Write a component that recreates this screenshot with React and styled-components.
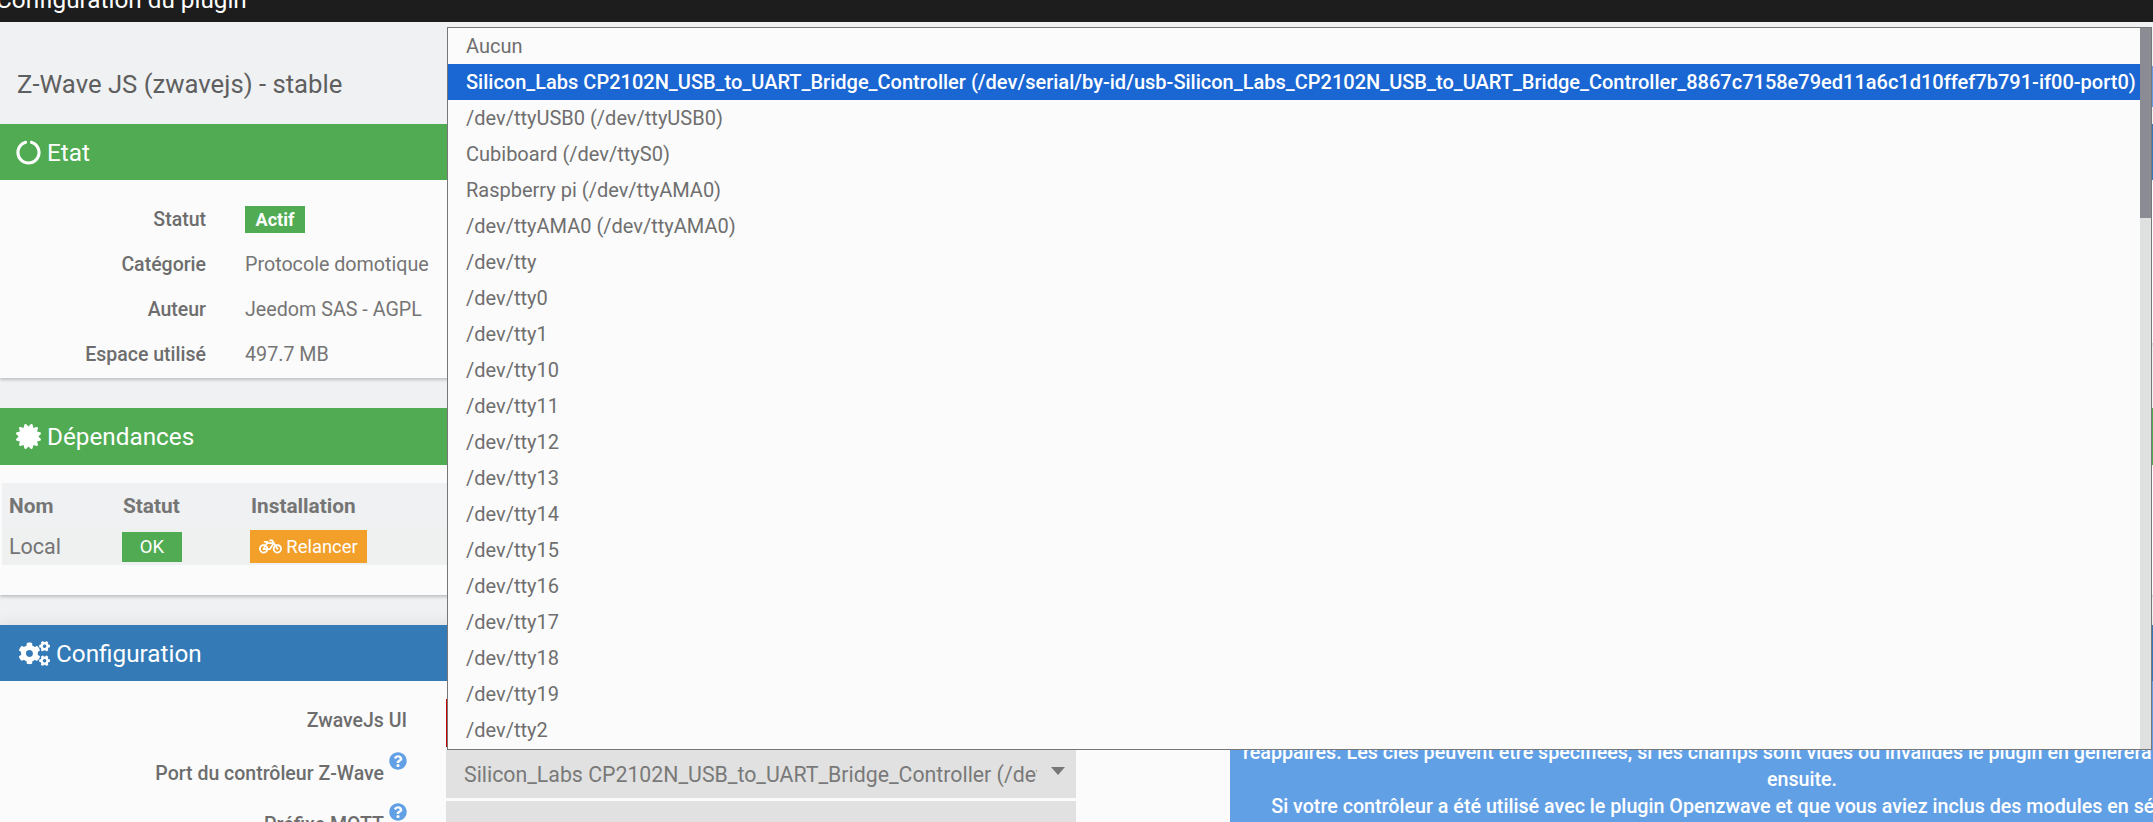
import React from "react";
import styled, { createGlobalStyle } from "styled-components";
import { FaCircleNotch, FaCertificate, FaCogs, FaBicycle, FaQuestionCircle } from "react-icons/fa";

const Global = createGlobalStyle`
  html, body { margin: 0; padding: 0; height: 822px; overflow: hidden; background: #f0f1f3; }
  body { font-family: Roboto, "Liberation Sans", sans-serif; color: #6b6b6b; }
`;
const Page = styled.div`position: relative; width: 2153px; height: 822px; overflow: hidden; display: flex; flex-direction: column;`;
const TopBar = styled.header`height: 22px; flex: none; background: #1d1d1d; color: #fff; overflow: hidden; display: flex; align-items: flex-end; position: relative; z-index: 1;`;
const TopTitle = styled.span`font-size: 24.3px; line-height: 28px; margin-left: -4px; margin-bottom: 8px; white-space: nowrap;`;
const TitleRow = styled.div`height: 102px; flex: none; display: flex; align-items: center; justify-content: space-between; padding-top: 24px; box-sizing: border-box;`;
const PluginName = styled.h1`margin: 0 0 0 17px; font-size: 25.7px; font-weight: 400; color: #5f5f5f; line-height: 30px; position: relative; top: -1px;`;
const Action = styled.div`width: 300px; height: 41px; background: #62a0e6; position: relative; top: 1px;`;
const Columns = styled.div`display: grid; grid-template-columns: 1075px 1fr; column-gap: 5px; flex: none;`;
const Stack = styled.div`display: flex; flex-direction: column;`;
const Panel = styled.section`
  background: #fbfbfb;
  box-shadow: 0 2px 3px rgba(0,0,0,.2);
  height: ${p => p.$height}px;
  margin-bottom: ${p => p.$gap}px;
`;
const PanelHead = styled.div`
  height: ${p => p.$h || 56}px; background: ${p => p.$color}; color: #fff; display: flex; align-items: center; gap: 6px;
  padding-left: ${p => p.$pad || 16}px; font-size: 24.3px; box-sizing: border-box;
  svg { flex: none; }
`;
const InfoGrid = styled.div`display: grid; grid-template-columns: 206px 1fr; column-gap: 39px; grid-auto-rows: 45px; padding-top: 17px;`;
const InfoLabel = styled.div`text-align: right; font-size: 19.5px; font-weight: 500; line-height: 45px; color: #6d6d6d;`;
const InfoValue = styled.div`font-size: 19.7px; line-height: 45px; color: #757575; display: flex; align-items: center; white-space: nowrap;`;
const Badge = styled.span`background: #50ab53; color: #fff; font-weight: 700; font-size: 18px; width: 60px; height: 27px; display: flex; align-items: center; justify-content: center;`;
const DepTable = styled.div`margin: 18px 0 0 2px;`;
const DepRow = styled.div`
  display: grid; grid-template-columns: 114px 128px 1fr; height: ${p => p.$h}px; align-items: center;
  background: ${p => p.$bg}; padding-left: 7px; font-weight: ${p => p.$w}; color: #757575; font-size: ${p => p.$size}px;
`;
const OkBtn = styled.span`background: #50ab53; color: #fff; width: 60px; height: 30px; display: flex; align-items: center; justify-content: center; font-size: 18.5px; margin-left: -1px; font-weight: 400;`;
const RetryBtn = styled.span`background: #f2a02a; color: #fff; width: 117px; height: 33px; display: flex; align-items: center; justify-content: center; gap: 4px; font-size: 18.4px; margin-left: -1px;`;
const ConfigPanel = styled.section`background: #fbfbfb; flex: 1; min-height: 0; box-shadow: 0 -3px 12px rgba(0,0,0,.07);`;
const ConfigBody = styled.div`display: grid; grid-template-columns: 1230px 1fr; height: 141px; overflow: hidden;`;
const Form = styled.div`display: flex; flex-direction: column; padding-top: 18px;`;
const FormRow = styled.div`display: grid; grid-template-columns: 407px 630px; column-gap: 39px; height: ${p => p.$h}px; margin-bottom: ${p => p.$mb || 0}px;`;
const FormLabel = styled.label`display: flex; justify-content: flex-end; font-size: 19.5px; font-weight: 500; color: #6d6d6d; gap: 5px; align-items: center; padding-bottom: ${p => p.$pb || 0}px; box-sizing: border-box; white-space: nowrap;`;
const Help = styled(FaQuestionCircle)`color: #62a0e6; font-size: 18px; align-self: flex-start; margin-top: ${p => p.$mt}px;`;
const RedButton = styled.div`background: #c40000; height: 48px;`;
const FakeSelect = styled.div`background: #e0e1e0; height: 48px; display: flex; align-items: center; padding-left: 18px; position: relative; font-size: 21.3px; color: #797979; box-sizing: border-box;`;
const SelectText = styled.span`width: 573px; overflow: hidden; white-space: nowrap;`;
const Caret = styled.span`position: absolute; left: 605px; top: 17px; width: 0; height: 0; border-left: 7px solid transparent; border-right: 7px solid transparent; border-top: 8px solid #777;`;
const Alert = styled.aside`background: #62a0e6; color: #fff; width: 1144px; height: 141px; box-sizing: border-box; padding-top: 4px; font-size: 19.7px; font-weight: 500; line-height: 27px; text-align: center; white-space: nowrap;`;
const AlertLine = styled.div`display: flex; justify-content: center;`;
const Dropdown = styled.div`position: absolute; left: 447px; top: 27px; width: 1705px; height: 723px; box-sizing: border-box; border: 1px solid #777; background: #fbfbfb; display: flex; z-index: 2;`;
const OptionList = styled.ul`list-style: none; margin: 0; padding: 0; flex: 1; min-width: 0; overflow: hidden;`;
const Option = styled.li`
  height: 36px; line-height: 36px; padding-left: 18px; font-size: 20px; white-space: nowrap;
  background: ${p => p.$active ? "#1a66d3" : "transparent"}; color: ${p => p.$active ? "#fff" : "#6f6f6f"};
  font-weight: ${p => p.$active ? 500 : 400};
`;
const Track = styled.div`width: 11px; flex: none; background: #dfe0e0;`;
const Thumb = styled.div`height: 190px; background: #8b8b93;`;

const options = ["Aucun","Silicon_Labs CP2102N_USB_to_UART_Bridge_Controller (/dev/serial/by-id/usb-Silicon_Labs_CP2102N_USB_to_UART_Bridge_Controller_8867c7158e79ed11a6c1d10ffef7b791-if00-port0)","/dev/ttyUSB0 (/dev/ttyUSB0)","Cubiboard (/dev/ttyS0)","Raspberry pi (/dev/ttyAMA0)","/dev/ttyAMA0 (/dev/ttyAMA0)","/dev/tty","/dev/tty0","/dev/tty1","/dev/tty10","/dev/tty11","/dev/tty12","/dev/tty13","/dev/tty14","/dev/tty15","/dev/tty16","/dev/tty17","/dev/tty18","/dev/tty19","/dev/tty2"];

export default function App() {
  return (
    <Page>
      <Global />
      <TopBar><TopTitle>Configuration du plugin</TopTitle></TopBar>
      <TitleRow>
        <PluginName>Z-Wave JS (zwavejs) - stable</PluginName>
        <Action />
      </TitleRow>
      <Columns>
        <Stack>
          <Panel $height={254} $gap={30}>
            <PanelHead $color="#50ab53"><FaCircleNotch size={25} />Etat</PanelHead>
            <InfoGrid>
              <InfoLabel>Statut</InfoLabel><InfoValue><Badge>Actif</Badge></InfoValue>
              <InfoLabel>Catégorie</InfoLabel><InfoValue>Protocole domotique</InfoValue>
              <InfoLabel>Auteur</InfoLabel><InfoValue>Jeedom SAS - AGPL</InfoValue>
              <InfoLabel>Espace utilisé</InfoLabel><InfoValue>497.7 MB</InfoValue>
            </InfoGrid>
          </Panel>
          <Panel $height={187} $gap={30}>
            <PanelHead $color="#50ab53" $h={57}><FaCertificate size={25} />Dépendances</PanelHead>
            <DepTable>
              <DepRow $h={45} $bg="#f0f1f3" $w={700} $size={20.8}><span>Nom</span><span>Statut</span><span>Installation</span></DepRow>
              <DepRow $h={37} $bg="#eff0f0" $w={400} $size={21.5}>
                <span>Local</span><OkBtn>OK</OkBtn>
                <RetryBtn><FaBicycle size={23} />Relancer</RetryBtn>
              </DepRow>
            </DepTable>
          </Panel>
        </Stack>
        <Stack>
          <Panel $height={219} $gap={65}><PanelHead $color="#337ab7" /></Panel>
          <Panel $height={187} $gap={30}><PanelHead $color="#50ab53" $h={57} /></Panel>
        </Stack>
      </Columns>
      <ConfigPanel>
        <PanelHead $color="#337ab7" $pad={19} $h={56}><FaCogs size={31} />Configuration</PanelHead>
        <ConfigBody>
          <Form>
            <FormRow $h={48} $mb={3}><FormLabel $pb={5}>ZwaveJs UI</FormLabel><RedButton /></FormRow>
            <FormRow $h={48} $mb={3}>
              <FormLabel $pb={2}>Port du contrôleur Z-Wave<Help $mt={2} /></FormLabel>
              <FakeSelect><SelectText>Silicon_Labs CP2102N_USB_to_UART_Bridge_Controller (/dev/serial/by-id/usb-Silicon_Labs)</SelectText><Caret /></FakeSelect>
            </FormRow>
            <FormRow $h={48}>
              <FormLabel $pb={2}>Préfixe MQTT<Help $mt={2} /></FormLabel>
              <FakeSelect />
            </FormRow>
          </Form>
          <Alert>
            <AlertLine>&nbsp;</AlertLine>
            <AlertLine>&nbsp;</AlertLine>
            <AlertLine>réappairés. Les clés peuvent être spécifiées, si les champs sont vides ou invalides le plugin en générera de nouvelles valeurs ici</AlertLine>
            <AlertLine>ensuite.</AlertLine>
            <AlertLine>Si votre contrôleur a été utilisé avec le plugin Openzwave et que vous aviez inclus des modules en sécurité, merci de bien</AlertLine>
          </Alert>
        </ConfigBody>
      </ConfigPanel>
      <Dropdown>
        <OptionList>{options.map((o, i) => <Option key={o} $active={i === 1}>{o}</Option>)}</OptionList>
        <Track><Thumb /></Track>
      </Dropdown>
    </Page>
  );
}
